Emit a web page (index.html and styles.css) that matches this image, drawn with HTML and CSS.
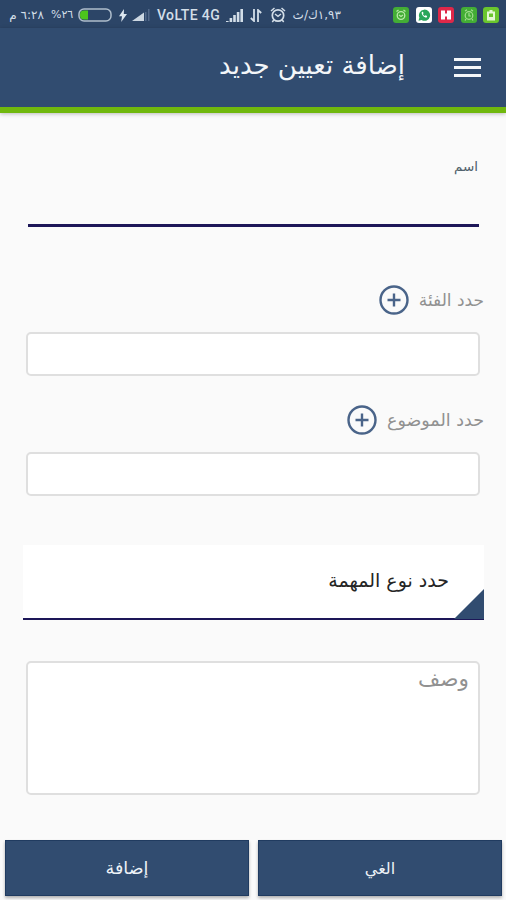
FILE: index.html
```html
<!DOCTYPE html>
<html lang="ar" dir="rtl">
<head>
  <meta charset="UTF-8" />
  <meta name="viewport" content="width=device-width, initial-scale=1" />
  <title>إضافة تعيين جديد</title>
  <link rel="stylesheet" href="styles.css">
</head>
<body>
  <!-- Status bar -->
  <div class="status-bar" dir="ltr">
    <span class="status-time" dir="rtl">٦:٢٨ م</span>
    <span class="status-percent">%٢٦</span>
    <svg class="battery" width="34" height="14" viewBox="0 0 34 14">
      <rect x="1" y="1" width="32" height="12" rx="5" fill="none" stroke="#aebdcc" stroke-width="1.5" />
      <path d="M10 2.5H6a4 4 0 0 0-4 4v1a4 4 0 0 0 4 4h4z" fill="#4cc51c" />
    </svg>
    <svg class="bolt" width="8" height="13" viewBox="0 0 8 13">
      <path d="M5 0 0 7.3h3L2.2 13 8 5H4.8z" fill="#dce6ef" />
    </svg>
    <svg class="signal-weak" width="18" height="12" viewBox="0 0 18 12">
      <path d="M0 12 12 3.500V12z" fill="#ccd7e2" />
      <path d="M13 3h1.500v9H13zM16 0h1.500v12H16z" fill="#52698a" />
    </svg>
    <span class="status-network">VoLTE 4G</span>
    <svg class="signal" width="18" height="13" viewBox="0 0 18 13">
      <path d="M0 12h2.600v1H0zM3.600 9h2.600v4H3.600zM7.200 6h2.600v7H7.200zM10.800 3h2.600v10h-2.600zM14.400 0h2.600v13h-2.600z" fill="#d3dee8" />
    </svg>
    <svg class="transfer" width="12" height="13" viewBox="0 0 12 13">
      <path d="M4 0v12L.8 9M8 13V1l3.200 3" fill="none" stroke="#d3dee8" stroke-width="1.8" />
    </svg>
    <svg class="alarm" width="16" height="16" viewBox="0 0 16 16">
      <circle cx="8" cy="8.500" r="5.700" fill="none" stroke="#d3dee8" stroke-width="1.700" />
      <path d="M1 4 4.500 1M15 4 11.500 1M5 7l3 2.300L11 7M3.800 13l-1.500 2M12.200 13l1.500 2" fill="none" stroke="#d3dee8" stroke-width="1.500" />
    </svg>
    <span class="status-speed" dir="rtl">١,٩٣ك/ث</span>
    <div class="notifications">
      <svg width="16" height="16" viewBox="0 0 16 16">
        <rect width="16" height="16" rx="3" fill="#43ad35" />
        <circle cx="8" cy="8.500" r="3.800" fill="none" stroke="#b9e9a9" stroke-width="1.300" />
        <path d="M3.500 4.500 5.500 3M12.500 4.500l-2-1.500M6 8l2 1.500L10 8" fill="none" stroke="#b9e9a9" stroke-width="1.200" />
      </svg>
      <svg width="16" height="16" viewBox="0 0 16 16">
        <rect width="16" height="16" rx="3" fill="#fff" />
        <path d="m2.500 13.700.9-3.200A5.600 5.600 0 1 1 5.600 13z" fill="#29a65a" />
        <path d="M5.800 5c-.7 2.500 2.200 5.800 4.900 5.600l.5-1.500-1.700-.9-.8.8C7.800 8.600 7.200 8 6.900 7.100l.7-.8L6.900 4.700z" fill="#fff" />
      </svg>
      <svg width="16" height="16" viewBox="0 0 16 16">
        <rect width="16" height="16" rx="3" fill="#df2849" />
        <path d="M3 3.500h4v3h2v-3h4v9H9v-3H7v3H3z" fill="#fff" />
      </svg>
      <svg width="16" height="16" viewBox="0 0 16 16">
        <rect width="16" height="16" rx="3" fill="#43ad35" />
        <circle cx="8" cy="8.500" r="3.800" fill="none" stroke="#a4df91" stroke-width="1.200" />
        <path d="M4 4 6 2.800M12 4l-2-1.200M8 6v3h2M5 12l-1 1.500M11 12l1 1.500" fill="none" stroke="#a4df91" stroke-width="1.200" />
      </svg>
      <svg width="16" height="16" viewBox="0 0 16 16">
        <rect width="16" height="16" rx="3" fill="#6ac62d" />
        <path d="M6.500 3h3v1.500H12v9H4v-9h2.500z" fill="#e3f8d3" />
        <path d="M6 6.500h4V10H6z" fill="#6ac62d" />
      </svg>
    </div>
  </div>

  <header class="app-bar">
    <button class="menu-btn" type="button" aria-label="القائمة">
      <span></span>
      <span></span>
      <span></span>
    </button>
    <h1>إضافة تعيين جديد</h1>
  </header>

  <main>
    <form class="assignment-form" id="assignment-form">
      <label class="name-label" for="name">اسم</label>
      <input class="name-input" id="name" type="text">

      <div class="field-head category-head">
        <label for="category">حدد الفئة</label>
        <svg width="30" height="30" viewBox="0 0 30 30">
          <circle cx="15" cy="15" r="13.500" />
          <path d="M15 8.500v13M8.500 15h13" />
        </svg>
      </div>
      <input class="box-input" id="category" type="text">

      <div class="field-head subject-head">
        <label for="subject">حدد الموضوع</label>
        <svg width="30" height="30" viewBox="0 0 30 30">
          <circle cx="15" cy="15" r="13.500" />
          <path d="M15 8.500v13M8.500 15h13" />
        </svg>
      </div>
      <input class="box-input" id="subject" type="text">

      <div class="task-type" role="button" tabindex="0">
        <span>حدد نوع المهمة</span>
        <svg class="task-corner" width="30" height="30" viewBox="0 0 30 30">
          <path d="M30 0v30H0z" />
        </svg>
      </div>

      <textarea class="description" placeholder="وصف"></textarea>
    </form>
  </main>

  <footer class="actions">
    <button class="cancel" type="button">الغي</button>
    <button type="submit" form="assignment-form">إضافة</button>
  </footer>
</body>
</html>
```

FILE: styles.css
```css
:root {
  --primary: #314c70;
  --green: #70b80d;
  --line: #1d1758;
  --bg: #fafafa;
  --border: #dfdfdf;
}
* { box-sizing: border-box; }
body {
  margin: 0;
  height: 900px;
  overflow: hidden;
  display: flex;
  flex-direction: column;
  font-family: "DejaVu Sans", sans-serif;
  background: var(--bg);
}
svg {
  display: block;
  flex: none;
}
button, input, textarea {
  font-family: inherit;
}

/* Status bar */
.status-bar {
  height: 28px;
  flex: none;
  display: flex;
  align-items: center;
  padding: 2px 7px 0 8px;
  background: #2c4567;
  color: #d3dee8;
  white-space: nowrap;
}
.status-bar span {
  flex: none;
  line-height: 20px;
}
.status-time {
  width: 36px;
  font-size: 12px;
}
.status-percent {
  width: 23px;
  margin-left: 7px;
  font-size: 11px;
}
.battery { margin-left: 4px; }
.bolt { margin-left: 7px; }
.signal-weak { margin-left: 5px; }
.status-network {
  width: 65px;
  margin-left: 7px;
  font-family: Roboto, sans-serif;
  font-size: 14px;
  font-weight: 500;
  letter-spacing: 0.4px;
}
.signal { margin-left: 4px; }
.transfer { margin-left: 6px; }
.alarm { margin-left: 8px; }
.status-speed {
  width: 48px;
  margin-left: 7px;
  font-size: 12px;
}
.notifications {
  display: flex;
  gap: 6.5px;
  margin-left: auto;
}

/* App bar */
.app-bar {
  height: 85px;
  flex: none;
  display: flex;
  align-items: center;
  padding: 0 25px 3px;
  background: var(--primary);
  border-bottom: 6px solid var(--green);
  box-shadow: 0 1px 4px rgba(0,0,0,0.25);
}
.menu-btn {
  width: 27px;
  height: 19px;
  margin-top: 2px;
  padding: 0;
  border: none;
  background: none;
  display: flex;
  flex-direction: column;
  justify-content: space-between;
}
.menu-btn span {
  width: 27px;
  height: 3px;
  background: #f5f7f9;
}
.app-bar h1 {
  margin: 0 49px 3px 0;
  font-size: 26px;
  font-weight: 400;
  line-height: 36px;
  color: #f3f6f9;
}

/* Form */
.assignment-form {
  display: flex;
  flex-direction: column;
  padding: 43px 22px 0 23px;
}
.name-label {
  margin-right: 6px;
  font-size: 13.5px;
  line-height: 20px;
  color: #50616a;
}
.name-input {
  height: 51px;
  margin: 0 5px;
  padding: 0;
  border: none;
  border-bottom: 3px solid var(--line);
  background: none;
}
.field-head {
  height: 30px;
  display: flex;
  align-items: center;
  gap: 10px;
}
.field-head label {
  font-size: 17px;
  line-height: 24px;
  color: #919191;
}
.field-head svg {
  fill: none;
  stroke: #4a6489;
  stroke-width: 2.4;
}
.category-head { margin-top: 58px; }
.subject-head { margin-top: 29px; }
.subject-head label { font-size: 17.5px; }
.box-input {
  height: 44px;
  margin: 17px 4px 0 3px;
  border: 2px solid var(--border);
  border-radius: 5px;
  background: #fff;
}
.task-type {
  position: relative;
  height: 75px;
  margin-top: 49px;
  padding: 20px 35px 0;
  border-bottom: 2px solid var(--line);
  background: #fff;
  font-size: 19px;
  line-height: 30px;
  color: #252525;
}
.task-corner {
  position: absolute;
  right: 0;
  bottom: -1px;
  fill: var(--primary);
}
.description {
  height: 134px;
  margin: 41px 4px 0 3px;
  padding: 1px 9px;
  border: 2px solid var(--border);
  border-radius: 5px;
  background: #fff;
  font-size: 21.5px;
  line-height: 30px;
  resize: none;
}
.description::placeholder {
  color: #919191;
}

/* Buttons */
.actions {
  display: flex;
  gap: 9px;
  margin-top: auto;
  padding: 0 4px 4px 5px;
}
.actions button {
  flex: 1;
  height: 56px;
  padding: 0;
  border: 1px solid #203b60;
  background: var(--primary);
  box-shadow: 0 2px 3px rgba(0,0,0,0.3);
  font-size: 17.5px;
  color: #edf2f7;
}
.actions .cancel {
  font-size: 16px;
}
```
